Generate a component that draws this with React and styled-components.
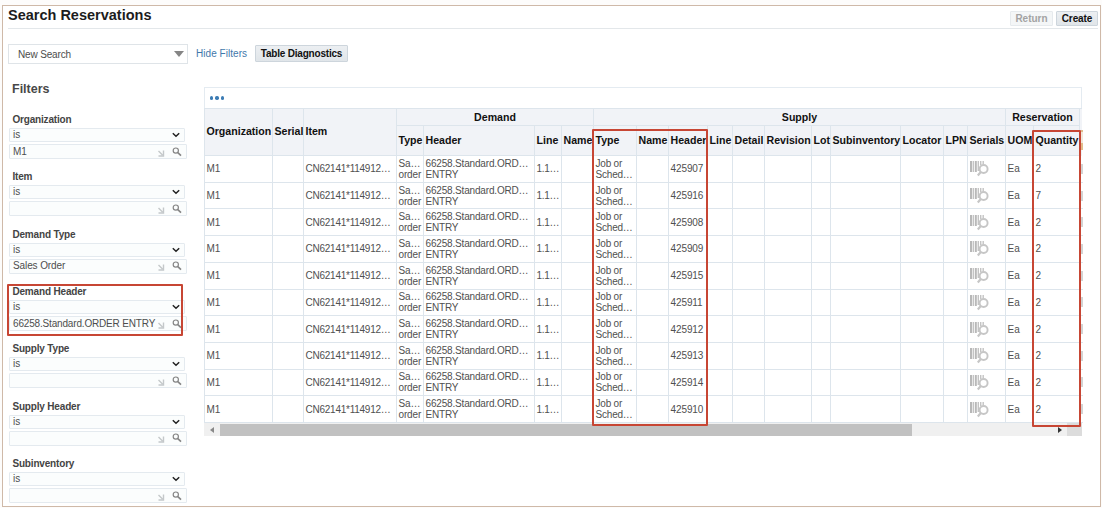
import React from "react";
import styled, { createGlobalStyle } from "styled-components";

const line = "#dde5ec";
const accent = "#c74634";
const columns =
  "68px 31px 93px 27px 111px 27px 32px 43px 32px 39px 25px 32px 47px 19px 70px 43px 24px 38px 28px 46px 3px";

const GlobalStyle = createGlobalStyle`
  * { box-sizing: border-box; }
  body { margin: 0; background: #fdfcfb; overflow: hidden; }
`;

const Page = styled.div`
  position: relative;
  width: 1102px;
  height: 508px;
  padding: 5px 1px 1px 2px;
  font-family: "Liberation Sans", Arial, sans-serif;
  font-size: 10px;
  color: #4d4d4d;
  white-space: nowrap;
`;

const Frame = styled.main`
  height: 502px;
  border: 1px solid #cfb9a8;
  background: #fff;
  padding: 0 2px 0 5px;
`;

const TitleBar = styled.header`
  display: flex;
  justify-content: space-between;
  align-items: flex-start;
  height: 23px;
  border-bottom: 1px solid #e3e7ea;
`;

const Title = styled.h1`
  margin: 0;
  font-size: 14.5px;
  line-height: 18px;
  color: #1c1c1c;
`;

const Actions = styled.div`
  display: flex;
  gap: 3px;
  padding: 5px 0 0;
`;

const Button = styled.button`
  flex: none;
  width: ${(p) => p.$w}px;
  height: ${(p) => p.$h || 15}px;
  padding: 0;
  border: 1px solid ${(p) => (p.disabled ? "#e6eaed" : "#cdd5dc")};
  border-radius: 1px;
  background: ${(p) => (p.disabled ? "#f4f6f7" : "linear-gradient(#eceff2, #e0e5e9)")};
  color: ${(p) => (p.disabled ? "#a3a3a3" : "#111")};
  font: bold 10px/12px "Liberation Sans", Arial, sans-serif;
  letter-spacing: ${(p) => p.$ls || 0}px;
`;

const Toolbar = styled.div`
  display: flex;
  align-items: flex-start;
  height: 53px;
  padding-top: 15px;
`;

const SearchSelect = styled.div`
  display: flex;
  flex: none;
  align-items: center;
  justify-content: space-between;
  width: 180px;
  height: 20px;
  border: 1px solid #dfe4e8;
  padding: 0 3px 0 9px;
  letter-spacing: -0.15px;
`;

const HideLink = styled.a`
  flex: none;
  width: 67px;
  padding-left: 8px;
  line-height: 20px;
  letter-spacing: 0.05px;
  color: #3f78ab;
  & + button { margin-top: 1px; }
`;

const Body = styled.div`
  display: flex;
`;

const Sidebar = styled.aside`
  width: 196px;
  height: 424px;
  overflow: hidden;
`;

const FiltersHeading = styled.h2`
  margin: 0;
  height: 31px;
  padding-left: 4px;
  font-size: 12.5px;
  line-height: 15px;
  color: #484848;
`;

const Filter = styled.section`
  height: 57.35px;
`;

const FilterLabel = styled.label`
  display: block;
  height: 15px;
  padding-left: 4.4px;
  font-weight: bold;
  font-size: 10px;
  letter-spacing: -0.17px;
  line-height: 13px;
  color: #444;
`;

const Field = styled.div`
  display: flex;
  align-items: center;
  width: ${(p) => p.$w}px;
  height: ${(p) => p.$h}px;
  margin: 0 0 ${(p) => p.$gap || 0}px 1px;
  padding: 0 4px 0 3px;
  border: 1px solid #e4eaef;
  border-radius: 1px;
  background: #fbfdfd;
  font-size: 10px;
  letter-spacing: ${(p) => p.$ls || 0}px;
  line-height: 12px;
  & > span { flex: 1; min-width: 0; }
  & > svg { flex: none; }
`;

const Panel = styled.section`
  width: 879px;
  padding-top: 5px;
`;

const Menu = styled.div`
  display: flex;
  align-items: center;
  gap: 2px;
  width: 878px;
  height: 21px;
  padding-left: 5px;
  border: 1px solid #e4ebf1;
  border-bottom: 0;
`;

const Dot = styled.i`
  width: 3.4px;
  height: 3.4px;
  border-radius: 50%;
  background: #3c7cb4;
`;

const Grid = styled.div`
  display: grid;
  grid-template-columns: ${columns};
  grid-template-rows: 17px 30px;
  width: 878px;
  height: 48px;
  border-top: 1px solid ${line};
  border-left: 1px solid ${line};
  background: #f1f3f7;
`;

const Head = styled.div`
  display: flex;
  align-items: center;
  justify-content: ${(p) => (p.$center ? "center" : "flex-start")};
  grid-column: ${(p) => p.$col};
  grid-row: ${(p) => p.$row};
  padding: 0 0 ${(p) => (p.$center ? 1 : 2)}px ${(p) => (p.$center ? 0 : 1.5)}px;
  border-right: 1px solid ${line};
  border-bottom: 1px solid ${line};
  font-weight: bold;
  font-size: 10.6px;
  color: #111;
`;

const Rows = styled.div`
  display: grid;
  grid-template-rows: repeat(10, 1fr);
  width: 878px;
  height: 267px;
  border-left: 1px solid ${line};
`;

const Row = styled.div`
  display: grid;
  grid-template-columns: ${columns};
  border-bottom: 1px solid ${line};
`;

const Cell = styled.div`
  display: flex;
  align-items: center;
  padding-left: 1.5px;
  border-right: 1px solid ${line};
  font-size: 10px;
  line-height: 11px;
  letter-spacing: ${(p) => p.$ls || 0}px;
  color: #505050;
`;

const Marker = styled.i`
  align-self: center;
  width: 2px;
  height: 10px;
  margin-left: 1px;
  background: #d4d4d4;
`;

const HeadMarker = styled.i`
  grid-column: 21;
  grid-row: 2;
  width: 2px;
  height: 20px;
  margin: 4px 0 0 1px;
  background: linear-gradient(#e0bd8c 0 2px, #f1e8dc 2px 13px, #e0bd8c 13px);
`;

const Scrollbar = styled.div`
  display: flex;
  align-items: center;
  width: 878px;
  height: 13px;
  background: #f0f0f0;
`;

const Arrow = styled.div`
  display: flex;
  align-items: center;
  justify-content: center;
  width: 15px;
`;

const Thumb = styled.div`
  width: 692px;
  height: 12px;
  margin-right: 140px;
  margin-left: 1px;
  background: #c1c1c1;
`;

const Corner = styled.div`
  width: 15px;
  height: 13px;
  background: #dcdcdc;
`;

const Highlight = styled.div`
  position: absolute;
  left: ${(p) => p.$x}px;
  top: ${(p) => p.$y}px;
  width: ${(p) => p.$w}px;
  height: ${(p) => p.$h}px;
  border: 2px solid ${accent};
  border-radius: 1px;
`;

const Chevron = () => (
  <svg width="8" height="6" viewBox="0 0 8 6">
    <path d="M0.8 1.2 4 4.2 7.2 1.2" fill="none" stroke="#222" strokeWidth="1.5" />
  </svg>
);

const FieldIcons = () => (
  <svg width="25" height="14" viewBox="0 0 25 14">
    <path d="M1.5 6 5.5 10M6.5 5.5V11H1.5" fill="none" stroke="#c4c8ca" strokeWidth="1.4" />
    <circle cx="18.8" cy="5.6" r="2.6" fill="none" stroke="#858585" strokeWidth="1.2" />
    <path d="M20.8 7.6 24 10.6" stroke="#858585" strokeWidth="1.6" />
  </svg>
);

const SerialIcon = () => (
  <svg width="19" height="17" viewBox="0 0 19 17">
    <path d="M1 1V12M5.8 1V12" stroke="#b8b8b8" strokeWidth="2" />
    <path d="M3.3 1V12M8.3 1V11M10.7 1V5M13.2 1V4" stroke="#c4c4c4" strokeWidth="1.4" />
    <circle cx="13.6" cy="9" r="4" fill="#fff" stroke="#c6c6c6" strokeWidth="1.9" />
    <path d="M10.8 12 7.8 15.5" stroke="#c6c6c6" strokeWidth="2.2" />
  </svg>
);

const filters = [
  ["Organization", "M1"],
  ["Item", ""],
  ["Demand Type", "Sales Order"],
  ["Demand Header", "66258.Standard.ORDER ENTRY"],
  ["Supply Type", ""],
  ["Supply Header", ""],
  ["Subinventory", ""],
];

const subHeads = [
  "Type", "Header", "Line", "Name", "Type", "Name", "Header", "Line", "Detail", "Revision",
  "Lot", "Subinventory", "Locator", "LPN", "Serials", "UOM", "Quantity",
];

const reservations = [
  ["425907", 2], ["425916", 7], ["425908", 2], ["425909", 2], ["425915", 2],
  ["425911", 2], ["425912", 2], ["425913", 2], ["425914", 2], ["425910", 2],
];

export default function App() {
  return (
    <Page>
      <GlobalStyle />
      <Frame>
        <TitleBar>
          <Title>Search Reservations</Title>
          <Actions>
            <Button $w={43} disabled>Return</Button>
            <Button $w={42} $ls={-0.1}>Create</Button>
          </Actions>
        </TitleBar>
        <Toolbar>
          <SearchSelect>
            New Search
            <svg width="10" height="6"><path d="M0 0H10L5 6Z" fill="#858585" /></svg>
          </SearchSelect>
          <HideLink>Hide Filters</HideLink>
          <Button $w={93} $h={17} $ls={-0.2}>Table Diagnostics</Button>
        </Toolbar>
        <Body>
          <Sidebar>
            <FiltersHeading>Filters</FiltersHeading>
            {filters.map(([label, value]) => (
              <Filter key={label}>
                <FilterLabel>{label}</FilterLabel>
                <Field $w={176} $h={14} $gap={2}><span>is</span><Chevron /></Field>
                <Field $w={178} $h={15} $ls={value.length > 12 ? -0.17 : -0.1}>
                  <span>{value}</span><FieldIcons />
                </Field>
              </Filter>
            ))}
          </Sidebar>
          <Panel>
            <Menu><Dot /><Dot /><Dot /></Menu>
            <Grid>
              <Head $col="1" $row="1 / 3">Organization</Head>
              <Head $col="2" $row="1 / 3">Serial</Head>
              <Head $col="3" $row="1 / 3">Item</Head>
              <Head $col="4 / 8" $row="1" $center>Demand</Head>
              <Head $col="8 / 19" $row="1" $center>Supply</Head>
              <Head $col="19 / 21" $row="1" $center>Reservation</Head>
              {subHeads.map((h, i) => (
                <Head key={i} $col={i + 4} $row="2">{h}</Head>
              ))}
              <HeadMarker />
            </Grid>
            <Rows>
              {reservations.map(([header, qty]) => (
                <Row key={header}>
                  <Cell>M1</Cell>
                  <Cell />
                  <Cell $ls={-0.25}>CN62141*114912…</Cell>
                  <Cell $ls={-0.15}>Sa…<br />order</Cell>
                  <Cell $ls={-0.17}>66258.Standard.ORD…<br />ENTRY</Cell>
                  <Cell $ls={-0.3}>1.1…</Cell>
                  <Cell />
                  <Cell $ls={-0.2}>Job or<br />Sched…</Cell>
                  <Cell />
                  <Cell $ls={-0.1}>{header}</Cell>
                  <Cell /><Cell /><Cell /><Cell /><Cell /><Cell /><Cell />
                  <Cell><SerialIcon /></Cell>
                  <Cell>Ea</Cell>
                  <Cell>{qty}</Cell>
                  <Marker />
                </Row>
              ))}
            </Rows>
            <Scrollbar>
              <Arrow><svg width="4" height="6"><path d="M4 0V6L0 3Z" fill="#888" /></svg></Arrow>
              <Thumb />
              <Arrow><svg width="4" height="6"><path d="M0 0V6L4 3Z" fill="#333" /></svg></Arrow>
              <Corner />
            </Scrollbar>
          </Panel>
        </Body>
      </Frame>
      <Highlight $x={7} $y={284} $w={176} $h={52} />
      <Highlight $x={592} $y={129} $w={116} $h={297} />
      <Highlight $x={1032} $y={130} $w={49} $h={297} />
    </Page>
  );
}
